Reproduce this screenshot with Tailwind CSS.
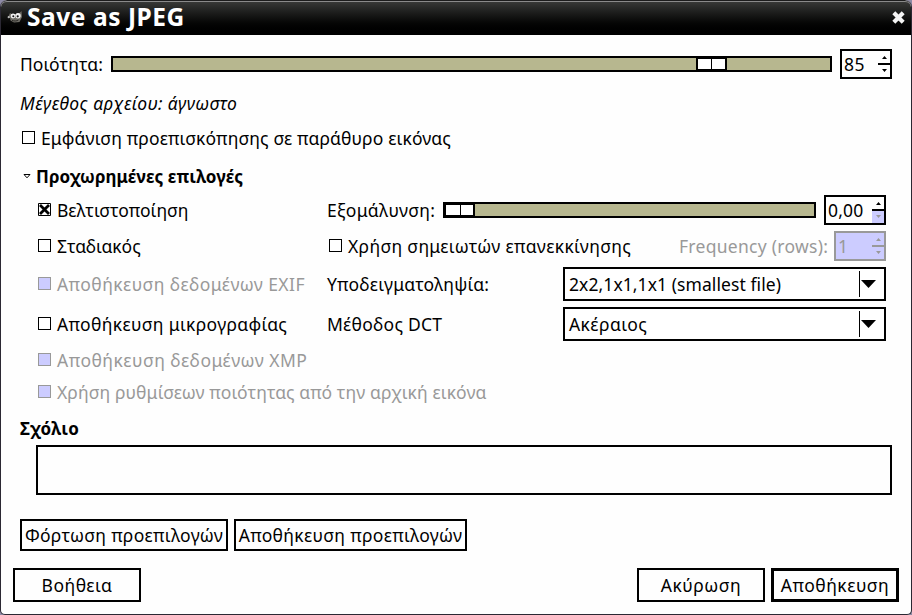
<!DOCTYPE html>
<html lang="el">
<head>
<meta charset="utf-8">
<title>Save as JPEG</title>
<script src="https://cdn.jsdelivr.net/npm/@tailwindcss/browser@4"></script>
</head>
<body class="bg-[#8d8aa5]">
<div class="flex h-[615px] w-[912px] flex-col overflow-hidden rounded-t-[7px] rounded-b-[5px] border-x border-b border-[#2b2833] bg-[#fefefe] font-['Noto_Sans','Open_Sans',sans-serif] text-[17.5px] leading-6 text-black whitespace-nowrap">

  <!-- Title bar -->
  <header class="flex h-[35px] shrink-0 items-center rounded-t-[6px] border-t border-[#1c1c1c] bg-linear-to-b from-[#3a3b39] to-black pr-[6px] pl-[6px] shadow-[inset_0_1px_0_#8a8a8a]">
    <svg class="mt-[-2px] h-[14px] w-[16px] shrink-0" viewBox="0 0 16 14">
      <path d="M3 3 5 4.500 12 3.500 14.500 1 15 7 12.500 12 7 12.500 3.500 10.500 3 8 1 7.500Z" fill="#6f6d66"/>
      <circle cx="1.700" cy="7.200" r="1.100" fill="#bbb"/>
      <circle cx="6" cy="6" r="2.400" fill="#f2f2f2"/>
      <circle cx="11" cy="5.800" r="2.700" fill="#f2f2f2"/>
      <circle cx="6.300" cy="6.300" r="1" fill="#111"/>
      <circle cx="10.700" cy="6.300" r="1.100" fill="#111"/>
      <path d="M5 10.300c2 1 4.500 1 6.500-.4" stroke="#2c2b28" fill="none"/>
    </svg>
    <h1 class="mt-[-3px] ml-1 text-[24.5px] leading-8 font-bold tracking-[0.55px] text-white">Save as JPEG</h1>
    <svg class="mt-[-1px] ml-auto h-[13px] w-[13px]" viewBox="0 0 13 13"><path d="M3.300 3.300 9.700 9.700M9.700 3.300 3.300 9.700" stroke="#f4f4f4" stroke-width="4.200" stroke-linecap="square"/></svg>
  </header>

  <main class="flex flex-col pt-[14px] pr-[19px] pl-[19px]">
    <!-- Quality -->
    <div class="flex h-[30px] items-center">
      <label class="w-[91px] tracking-[0.08px]">Ποιότητα:</label>
      <div class="flex h-4 w-[721px] border-2 border-black bg-[#b7b78f] pl-[583px]">
        <div class="flex h-3 w-[31px] border-x-2 border-y border-black bg-white"><i class="ml-[13px] w-px bg-black"></i></div>
      </div>
      <div class="ml-2 flex h-[30px] w-[52px] items-center justify-between border-2 border-black pl-[2px]">
        <span class="tracking-[0.5px]">85</span>
        <svg class="h-[26px] w-3" viewBox="0 0 12 26"><path d="M0 12h12v2H0zM4 8l2.500-3L9 8zM4 18l2.500 3L9 18z"/></svg>
      </div>
    </div>

    <p class="mt-3 h-6 tracking-[0.44px] italic">Μέγεθος αρχείου: άγνωστο</p>

    <label class="mt-[10px] flex h-[25px] items-center pl-[2px]">
      <i class="mr-[6px] size-[13px] border border-black bg-white"></i><span class="tracking-[0.14px]">Εμφάνιση προεπισκόπησης σε παράθυρο εικόνας</span>
    </label>

    <!-- Advanced options -->
    <div class="mt-[14px] flex h-6 items-center pl-[3px]">
      <svg class="h-[5px] w-[8px]" viewBox="0 0 8 5"><path d="M1 .5h6L4 3.800z" fill="#fff" stroke="#000"/></svg>
      <h2 class="mt-[2px] ml-[5px] text-[17px] font-bold tracking-[0.09px]">Προχωρημένες επιλογές</h2>
    </div>

    <div class="mt-[7px] flex h-[30px] items-center pl-[18px]">
      <label class="flex w-[289px] items-center">
        <svg class="mt-[-1px] mr-[6px] size-[13px]" viewBox="0 0 13 13"><path d="M.5.5h12v12H.500z" fill="#fff" stroke="#000"/><path d="M2 2l9 9M11 2l-9 9" stroke="#000" stroke-width="2.800"/></svg>
        <span>Βελτιστοποίηση</span>
      </label>
      <span class="w-[116px] tracking-[0.34px]">Εξομάλυνση:</span>
      <div class="flex h-4 w-[373px] border-2 border-black bg-[#b7b78f]">
        <div class="flex h-3 w-[30px] border-x-2 border-l-1 border-y border-black bg-white"><i class="ml-[14px] w-px bg-black"></i></div>
      </div>
      <div class="ml-2 flex h-[30px] w-[62px] items-center justify-between border-2 border-black pl-[2px]">
        <span class="tracking-[0.2px]">0,00</span>
        <svg class="h-[26px] w-3" viewBox="0 0 12 26"><path d="M0 14h12v12H0z" fill="#ccccff"/><path d="M0 12h12v2H0zM4 8l2.500-3L9 8z"/><path d="M4 18l2.500 3L9 18z" fill="#999"/></svg>
      </div>
    </div>

    <div class="mt-[6px] flex h-[30px] items-center pl-[18px]">
      <label class="flex w-[291px] items-center"><i class="mt-[-1px] mr-[6px] size-[13px] border border-black bg-white"></i><span class="tracking-[-0.05px]">Σταδιακός</span></label>
      <label class="flex w-[350px] items-center"><i class="mt-[-1px] mr-[6px] size-[13px] border border-black bg-white"></i><span class="tracking-[0.33px]">Χρήση σημειωτών επανεκκίνησης</span></label>
      <span class="w-[155px] tracking-[0.28px] text-[#999]">Frequency (rows):</span>
      <div class="flex h-[30px] w-[52px] items-center justify-between border-2 border-[#999] bg-[#ccccff] pl-[2px] text-[#999]">
        <span>1</span>
        <svg class="h-[26px] w-3" viewBox="0 0 12 26" fill="#999"><path d="M0 12h12v2H0zM4 8l2.500-3L9 8zM4 18l2.500 3L9 18z"/></svg>
      </div>
    </div>

    <div class="mt-[6px] flex h-[34px] items-center pl-[18px]">
      <label class="flex w-[289px] items-center text-[#999]"><i class="mt-[-1px] mr-[6px] size-[13px] border border-[#999] bg-[#ccccff]"></i><span class="tracking-[0.43px]">Αποθήκευση δεδομένων EXIF</span></label>
      <span class="w-[236px] tracking-[0.21px]">Υποδειγματοληψία:</span>
      <div class="flex h-[34px] w-[323px] items-center justify-between border-2 border-black bg-white pr-2 pl-1">
        <span class="tracking-[0.08px]">2x2,1x1,1x1 (smallest file)</span>
        <svg class="h-[26px] w-[17px]" viewBox="0 0 17 26"><path d="M0 0h1v26H0zM2 9h15l-7.500 8z"/></svg>
      </div>
    </div>

    <div class="mt-[6px] flex h-[34px] items-center pl-[18px]">
      <label class="flex w-[289px] items-center"><i class="mt-[-1px] mr-[6px] size-[13px] border border-black bg-white"></i><span class="tracking-[0.33px]">Αποθήκευση μικρογραφίας</span></label>
      <span class="w-[236px] tracking-[0.25px]">Μέθοδος DCT</span>
      <div class="flex h-[34px] w-[323px] items-center justify-between border-2 border-black bg-white pr-2 pl-1">
        <span class="tracking-[0.42px]">Ακέραιος</span>
        <svg class="h-[26px] w-[17px]" viewBox="0 0 17 26"><path d="M0 0h1v26H0zM2 9h15l-7.500 8z"/></svg>
      </div>
    </div>

    <label class="mt-[5px] flex h-[27px] items-center pl-[18px] text-[#999]"><i class="mr-[6px] size-[13px] border border-[#999] bg-[#ccccff]"></i><span class="tracking-[0.48px]">Αποθήκευση δεδομένων XMP</span></label>
    <label class="mt-[5px] flex h-[27px] items-center pl-[18px] text-[#999]"><i class="mr-[6px] size-[13px] border border-[#999] bg-[#ccccff]"></i><span class="tracking-[0.1px]">Χρήση ρυθμίσεων ποιότητας από την αρχική εικόνα</span></label>

    <!-- Comment -->
    <h2 class="mt-[12px] h-6 text-[17px] font-bold tracking-[0.35px]">Σχόλιο</h2>
    <div class="mt-1 ml-4 h-[50px] border-2 border-black bg-[#fefefe]"></div>

    <div class="mt-6 flex gap-[6px]">
      <button class="h-8 w-[208px] border-2 border-black bg-[#fefefe] tracking-[0.3px]">Φόρτωση προεπιλογών</button>
      <button class="h-8 w-[233px] border-2 border-black bg-[#fefefe] tracking-[0.32px]">Αποθήκευση προεπιλογών</button>
    </div>
  </main>

  <footer class="mt-[17px] flex gap-[6px] pr-3 pl-3">
    <button class="mr-auto h-[34px] w-32 border-2 border-black bg-[#fefefe] tracking-[0.5px]">Βοήθεια</button>
    <button class="h-[34px] w-32 border-2 border-black bg-[#fefefe] tracking-[0.5px]">Ακύρωση</button>
    <button class="h-[34px] w-32 border-3 border-black bg-[#fefefe] tracking-[0.5px]">Αποθήκευση</button>
  </footer>
</div>
</body>
</html>
